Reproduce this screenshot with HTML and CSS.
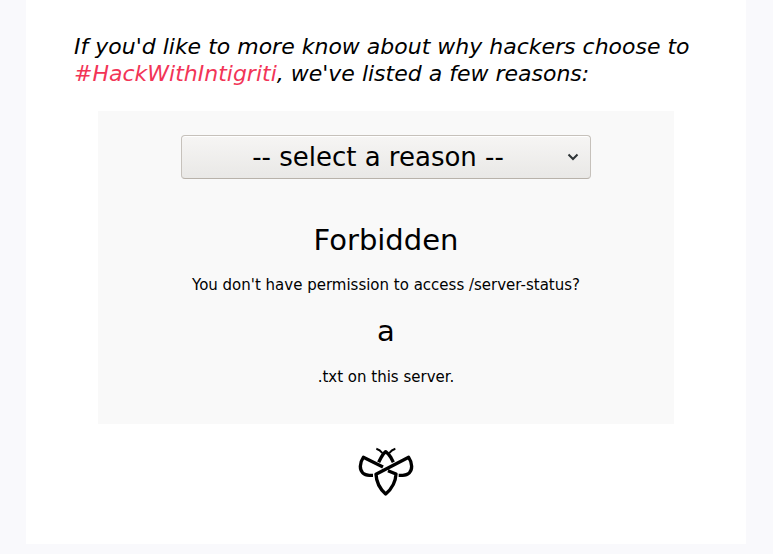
FILE: index.html
```html
<!DOCTYPE html>
<html lang="en">
<head>
<meta charset="utf-8">
<meta name="viewport" content="width=device-width, initial-scale=1">
<title>Hack With Intigriti</title>
<link rel="stylesheet" href="styles.css">
</head>
<body>
<main class="card">
  <p class="intro">If you'd like to more know about why hackers choose to <a href="#reasons">#HackWithIntigriti</a>, we've listed a few reasons:</p>
  <section class="panel" id="reasons">
    <div class="picker">
      <select class="reason" aria-label="Reason">
        <option>-- select a reason --</option>
      </select>
      <svg class="chevron" viewBox="0 0 12 8" aria-hidden="true"><path d="M1.500 1.500 6 6l4.500-4.500"/></svg>
    </div>
    <h1 class="title">Forbidden</h1>
    <p class="message">You don't have permission to access /server-status?</p>
    <h1 class="title">a</h1>
    <p class="message">.txt on this server.</p>
  </section>
  <svg class="logo" viewBox="24 18 168 150" role="img" aria-label="Intigriti">
    <path class="antenna" d="M79 26Q90 29 97 39M136 26Q125 29 118 39"/>
    <path d="M86 67L93 53Q99 41 107 35Q116 41 123 53L130 67"/>
    <path d="M69 106H58C41 106 31 95 31 79Q31 65 40 52L99 81"/>
    <path d="M146 106H158C175 106 185 95 185 79Q185 65 176 52L78 103C79 125 88 145 107 162C127 145 137 125 138 102L114 92"/>
  </svg>
</main>
</body>
</html>
```
FILE: styles.css
```css
* {
  box-sizing: border-box;
}

body {
  margin: 0;
  padding: 0 27px 10px 26px;
  background: #f9f9fc;
  color: #000;
  font-family: "DejaVu Sans", Verdana, sans-serif;
}

.card {
  max-width: 720px;
  margin: 0 auto;
  padding: 33px 48px 48px;
  background: #fff;
  text-align: center;
}

.intro {
  margin: 0 0 24px;
  font-size: 22px;
  font-style: italic;
  line-height: 27px;
  text-align: left;
}

.intro a {
  color: #f23557;
  text-decoration: none;
}

.panel {
  max-width: 576px;
  margin: 0 auto 22px;
  padding: 24px 24px 36px;
  background: #f9f9f9;
}

.picker {
  position: relative;
  width: 410px;
  max-width: 100%;
  margin: 0 auto 42px;
}

.reason {
  display: block;
  width: 100%;
  height: 44px;
  padding: 0 24px 0 8px;
  appearance: none;
  border: 1px solid #c6c1bb;
  border-bottom-color: #b8b2aa;
  border-radius: 4px;
  background: linear-gradient(#f6f5f4, #e9e8e6);
  box-shadow: inset 0 1px #fff;
  color: #000;
  font: 26px "DejaVu Sans", Verdana, sans-serif;
  text-align: center;
  text-align-last: center;
}

.chevron {
  position: absolute;
  top: 18px;
  right: 12px;
  width: 12px;
  height: 8px;
  fill: none;
  stroke: #2e3436;
  stroke-width: 2;
  pointer-events: none;
}

.title {
  margin: 0;
  font-size: 29px;
  font-weight: 400;
  line-height: 38px;
}

.message {
  margin: 15px 0 16px;
  font-size: 15px;
  line-height: 22px;
}

.message:last-child {
  margin: 16px 0 0;
}

.logo {
  display: block;
  width: 56px;
  height: 50px;
  margin: 0 auto;
  fill: none;
  stroke: #000;
  stroke-width: 10;
  stroke-linejoin: round;
}

.antenna {
  stroke-width: 6;
}
```
